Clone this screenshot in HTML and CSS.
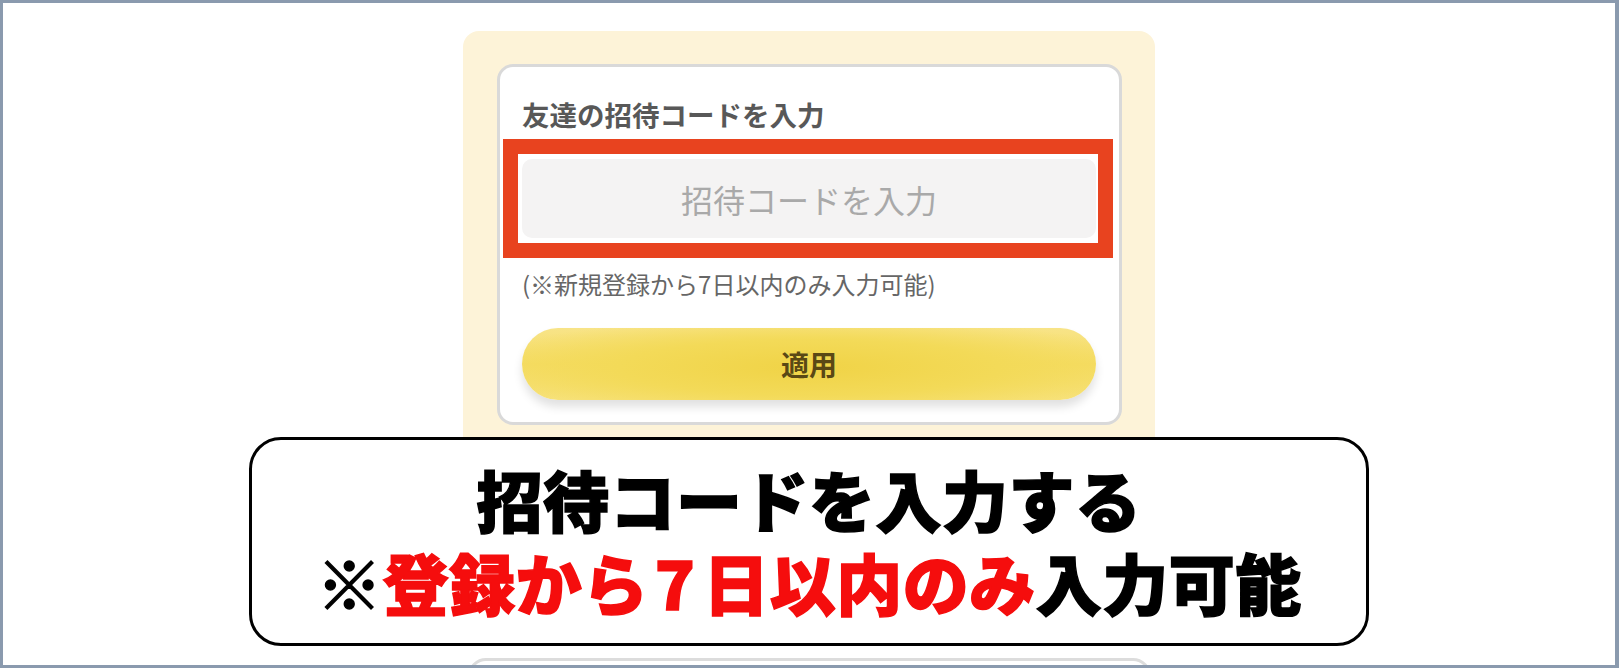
FILE: index.html
```html
<!DOCTYPE html>
<html lang="ja">
<head>
<meta charset="utf-8">
<title>招待コード入力</title>
<link rel="stylesheet" href="styles.css">
</head>
<body>
<div class="frame">
  <div class="stage">
    <section class="panel">
      <div class="card">
        <h2 class="card-title">友達の招待コードを入力</h2>
        <div class="field">
          <input class="code-input" type="text" placeholder="招待コードを入力">
          <div class="highlight"></div>
        </div>
        <p class="note">(※新規登録から7日以内のみ入力可能)</p>
        <button class="apply" type="button">適用</button>
      </div>
    </section>
    <section class="panel-next"></section>
  </div>
  <div class="callout">
    <div class="callout-line">招待コードを入力する</div>
    <div class="callout-line">※<span class="red">登録から<span class="digit">7</span>日以内のみ</span>入力可能</div>
  </div>
</div>
</body>
</html>
```

FILE: styles.css
```css
html, body {
  margin: 0;
  padding: 0;
  background: #ffffff;
}

body {
  font-family: "Noto Sans CJK JP", "Noto Sans", sans-serif;
}

.frame {
  position: relative;
  width: 1619px;
  height: 668px;
  box-sizing: border-box;
  border-style: solid;
  border-color: #8a9aae;
  border-width: 3px 4px 3px 3px;
  background: #ffffff;
  overflow: hidden;
}

.stage {
  display: flex;
  flex-direction: column;
  align-items: center;
  padding-top: 28px;
}

.panel {
  width: 692px;
  box-sizing: border-box;
  background: #fdf3d8;
  border-radius: 16px;
  padding: 33px 33px 180px 34px;
}

.card {
  width: 625px;
  box-sizing: border-box;
  background: #ffffff;
  border: 3px solid #d9d9d9;
  border-radius: 16px;
  padding: 30px 23px 22px 22px;
}

.card-title {
  margin: 0;
  font-size: 27.5px;
  line-height: 34px;
  font-weight: 700;
  color: #585858;
}

.field {
  position: relative;
  margin-top: 28px;
  height: 79px;
}

.code-input {
  display: block;
  width: 100%;
  height: 79px;
  box-sizing: border-box;
  border: none;
  border-radius: 10px;
  background: #f4f3f3;
  font-family: "Noto Sans CJK JP", "Noto Sans", sans-serif;
  font-size: 32px;
  text-align: center;
  color: #333;
  outline: none;
}

.code-input::placeholder {
  color: #a9a9a9;
}

.highlight {
  position: absolute;
  top: -20px;
  bottom: -20px;
  left: -19px;
  right: -17px;
  border: 15px solid #e8431f;
  pointer-events: none;
}

.note {
  margin: 30px 0 0;
  font-size: 24px;
  line-height: 32px;
  color: #666666;
}

.apply {
  display: block;
  margin-top: 28px;
  width: 100%;
  height: 72px;
  border: none;
  border-radius: 36px;
  background:
    radial-gradient(ellipse 60% 70% at 50% 55%, #f0d346 0%, #f3da58 55%, rgba(247,228,120,0) 100%),
    linear-gradient(180deg, #f8e488 0%, #f5dc64 50%, #f7e27c 100%);
  box-shadow: 0 7px 10px rgba(0, 0, 0, 0.12);
  font-family: "Noto Sans CJK JP", "Noto Sans", sans-serif;
  font-size: 28px;
  font-weight: 700;
  color: #5a4815;
}

.panel-next {
  margin-top: 53px;
  width: 683px;
  height: 100px;
  box-sizing: border-box;
  border: 3px solid #dcdcdc;
  border-radius: 18px;
  background: #ffffff;
}

.callout {
  position: absolute;
  top: 434px;
  left: 246px;
  width: 1120px;
  box-sizing: border-box;
  border: 3px solid #000000;
  border-radius: 32px;
  background: #ffffff;
  padding: 17px 0 20px;
  text-align: center;
  font-size: 66px;
  line-height: 83px;
  font-weight: 900;
  color: #000000;
  -webkit-text-stroke: 1.5px currentColor;
}

.callout-line {
  white-space: nowrap;
  letter-spacing: 0.5px;
}

.digit {
  padding: 0 8px 0 6px;
}

.red {
  color: #f50d0d;
}
```
